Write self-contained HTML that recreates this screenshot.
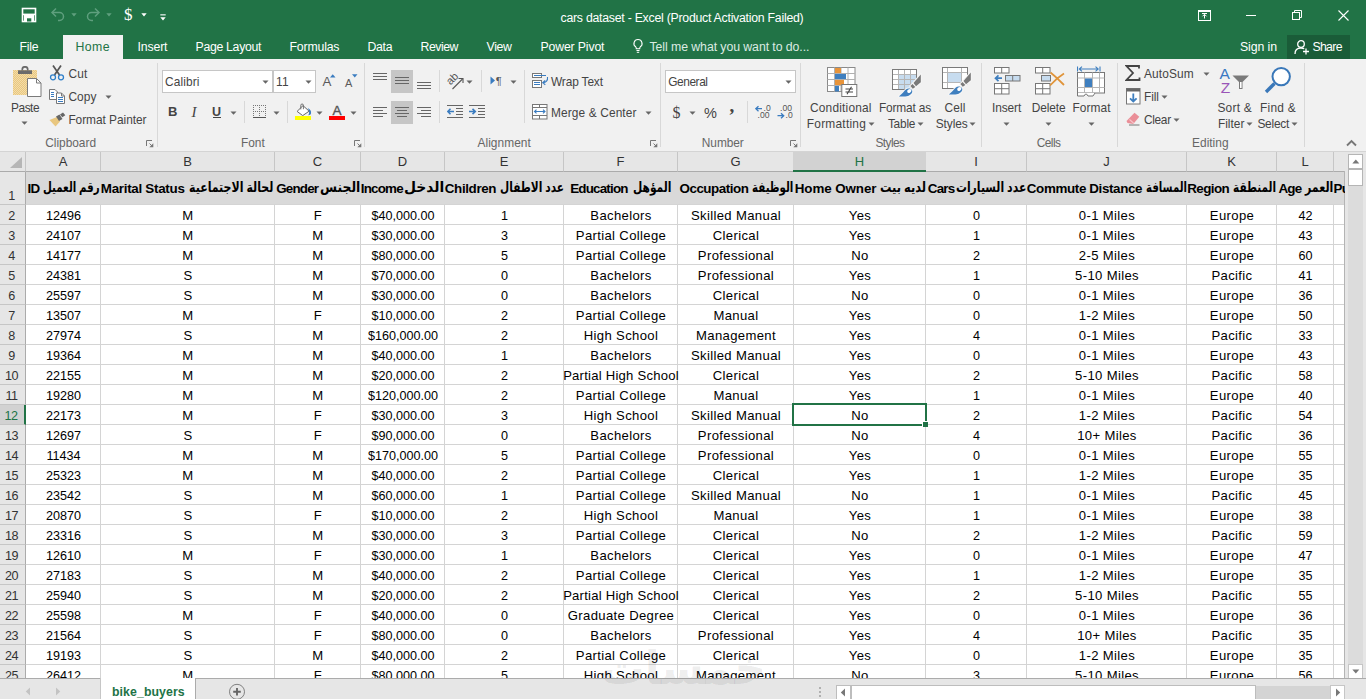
<!DOCTYPE html>
<html lang="en"><head><meta charset="utf-8"><title>cars dataset - Excel</title>
<style>
*{box-sizing:border-box;margin:0;padding:0}
html,body{width:1366px;height:699px;overflow:hidden;background:#fff}
body{position:relative;font-family:"Liberation Sans","DejaVu Sans",sans-serif;font-size:12px;color:#444}
.abs,.abs *{position:absolute}
#title{left:0;top:0;width:1366px;height:59px;background:#217346}
#title .t{color:#fff;font-size:12.5px;white-space:nowrap;line-height:14px}
#hometab{left:63px;top:35px;width:60px;height:25px;background:#f1f1f1}
#ribbon{left:0;top:59px;width:1366px;height:92px;background:#f1f1f1}
#ribbon .l{font-size:12.2px;color:#444;white-space:nowrap;line-height:14px}
#ribbon .g{font-size:12.2px;color:#666;white-space:nowrap;line-height:14px}
#ribbon .sep{width:1px;background:#d5d5d5;top:7px;height:77px}
.dd{width:0;height:0;border-left:3px solid transparent;border-right:3px solid transparent;border-top:3px solid #666}
#rb{left:0;top:151px;width:1366px;height:1px;background:#d4d4d4}
#grid{left:0;top:152px;width:1345px;height:526px;background:#fff;overflow:hidden}
#grid .ch{top:0;height:20px;background:#e6e6e6;border-right:1px solid #c6c6c6;border-bottom:1px solid #ababab;font-size:13px;color:#333;text-align:center;line-height:19px}
#grid .rh{left:0;width:26px;background:#e6e6e6;border-right:1px solid #ababab;border-bottom:1px solid #c6c6c6;font-size:12.6px;letter-spacing:-.5px;color:#333;text-align:center;line-height:19px;padding-right:2px}
#grid .c{font-size:13.1px;letter-spacing:.35px;padding-top:1px;color:#000;text-align:center;white-space:nowrap;line-height:20px;height:20px;overflow:visible}
#grid .c.n{font-size:12.6px;letter-spacing:0;padding-top:1px}
#grid .h1{font-weight:bold;font-size:13.2px;color:#000;white-space:nowrap;line-height:20px;height:20px;top:26px;text-align:center;direction:ltr}
.vl{top:20px;width:1px;height:510px;background:#d4d4d4}
.hl{left:26px;height:1px;width:1320px;background:#d4d4d4}
#bottom{left:0;top:678px;width:1366px;height:21px;background:#e6e6e6;border-top:1px solid #ababab}
#vscroll{left:1345px;top:152px;width:21px;height:526px;background:#e6e6e6}
</style></head><body>

<div id="title" class="abs">
<div style="left:560.5px;top:10.0px;line-height:16px;white-space:nowrap;font-size:12.3px;color:#fff;letter-spacing:-0.25px;">cars dataset - Excel (Product Activation Failed)</div>
<div style="left:19.5px;top:38.5px;line-height:16px;white-space:nowrap;font-size:12.3px;color:#fff;letter-spacing:-0.28px;">File</div>
<div style="left:137.5px;top:38.5px;line-height:16px;white-space:nowrap;font-size:12.3px;color:#fff;letter-spacing:-0.15px;">Insert</div>
<div style="left:195.5px;top:38.5px;line-height:16px;white-space:nowrap;font-size:12.3px;color:#fff;letter-spacing:-0.31px;">Page Layout</div>
<div style="left:289.5px;top:38.5px;line-height:16px;white-space:nowrap;font-size:12.3px;color:#fff;letter-spacing:-0.18px;">Formulas</div>
<div style="left:367.5px;top:38.5px;line-height:16px;white-space:nowrap;font-size:12.3px;color:#fff;letter-spacing:-0.33px;">Data</div>
<div style="left:420.5px;top:38.5px;line-height:16px;white-space:nowrap;font-size:12.3px;color:#fff;letter-spacing:-0.47px;">Review</div>
<div style="left:486.5px;top:38.5px;line-height:16px;white-space:nowrap;font-size:12.3px;color:#fff;letter-spacing:-0.31px;">View</div>
<div style="left:540.5px;top:38.5px;line-height:16px;white-space:nowrap;font-size:12.3px;color:#fff;letter-spacing:-0.16px;">Power Pivot</div>
<div style="left:649.5px;top:38.5px;line-height:16px;white-space:nowrap;font-size:12.3px;color:#dcebe2;letter-spacing:-0.07px;">Tell me what you want to do...</div>
<div style="left:1240.0px;top:38.5px;line-height:16px;white-space:nowrap;font-size:12.3px;color:#fff;letter-spacing:-0.10px;">Sign in</div>
<div style="left:1287px;top:35px;width:63px;height:24px;background:#1a5c38"></div>
<div style="left:1312.5px;top:38.5px;line-height:16px;white-space:nowrap;font-size:12.3px;color:#fff;letter-spacing:-0.71px;">Share</div>
<div id="hometab"></div>
<div style="left:75.5px;top:38.5px;line-height:16px;white-space:nowrap;font-size:12.3px;color:#217346;letter-spacing:0.40px;">Home</div>
<svg style="left:21.0px;top:7.0px" width="16" height="16" viewBox="0 0 16 16"><rect x="1.5" y="1.5" width="13" height="13" fill="none" stroke="#fff" stroke-width="1.6"/><rect x="3" y="8" width="10" height="6.5" fill="#fff"/><rect x="6" y="11.3" width="4.3" height="3.2" fill="#217346"/><rect x="1.5" y="6.6" width="13" height="1.6" fill="#fff"/></svg>
<svg style="left:50.0px;top:7.0px" width="16" height="15" viewBox="0 0 16 15"><path d="M2 5.5h7.5a4 4 0 0 1 0 8H8" fill="none" stroke="#5f9f7e" stroke-width="1.5"/><path d="M6 1.5L2 5.5l4 4" fill="none" stroke="#5f9f7e" stroke-width="1.5"/></svg>
<svg style="left:70.5px;top:12.5px" width="6" height="4" viewBox="0 0 6 4"><path d="M0.3 0.3h5.4L3 3.5z" fill="#5f9f7e"/></svg>
<svg style="left:85.0px;top:7.0px" width="16" height="15" viewBox="0 0 16 15"><path d="M14 5.5H6.5a4 4 0 0 0 0 8H8" fill="none" stroke="#5f9f7e" stroke-width="1.5"/><path d="M10 1.5l4 4l-4 4" fill="none" stroke="#5f9f7e" stroke-width="1.5"/></svg>
<svg style="left:105.5px;top:12.5px" width="6" height="4" viewBox="0 0 6 4"><path d="M0.3 0.3h5.4L3 3.5z" fill="#5f9f7e"/></svg>
<div style="left:124px;top:5px;font-size:17px;line-height:20px;color:#fff;font-family:'Liberation Serif',serif">$</div>
<svg style="left:140.5px;top:12.5px" width="6" height="4" viewBox="0 0 6 4"><path d="M0.3 0.3h5.4L3 3.5z" fill="#fff"/></svg>
<svg style="left:159.5px;top:13.5px" width="6" height="7" viewBox="0 0 6 7"><rect x="0.3" y="0.3" width="5.4" height="1.1" fill="#fff"/><path d="M0.3 3.2h5.4L3 6.4z" fill="#fff"/></svg>
<svg style="left:632.0px;top:38.0px" width="12" height="16" viewBox="0 0 12 16"><path d="M6 1.5a4 4 0 0 1 2.3 7.3c-.5.5-.6 1-.6 2H4.3c0-1-.1-1.500-.6-2A4 4 0 0 1 6 1.500z" fill="none" stroke="#fff" stroke-width="1.100"/><path d="M4.500 12.500h3M4.800 14.300h2.400" stroke="#fff" stroke-width="1"/></svg>
<svg style="left:1294.0px;top:38.5px" width="16" height="16" viewBox="0 0 16 16"><circle cx="7" cy="5" r="3.300" fill="none" stroke="#fff" stroke-width="1.300"/><path d="M1 15c0-4 2.500-6 6-6c1.300 0 2.300.3 3.200.8" fill="none" stroke="#fff" stroke-width="1.300"/><path d="M12 9.500v6M9 12.500h6" stroke="#fff" stroke-width="1.300"/></svg>
<svg style="left:1198.0px;top:10.0px" width="13" height="11" viewBox="0 0 13 11"><rect x="0.500" y="0.500" width="12" height="10" fill="none" stroke="#fff" stroke-width="1"/><rect x="0.500" y="0.500" width="12" height="1.500" fill="#fff"/><path d="M6.500 8.500V4.500M4.500 6.300l2-2l2 2M4 3.500h5" fill="none" stroke="#fff" stroke-width="1"/></svg>
<svg style="left:1246.0px;top:15.0px" width="10" height="1" viewBox="0 0 10 1"><rect x="0" y="0" width="10" height="1" fill="#fff"/></svg>
<svg style="left:1292.0px;top:10.0px" width="10" height="10" viewBox="0 0 10 10"><rect x="0.500" y="2.500" width="7" height="7" fill="none" stroke="#fff" stroke-width="1"/><path d="M2.500 2.500v-2h7v7h-2" fill="none" stroke="#fff" stroke-width="1"/></svg>
<svg style="left:1338.0px;top:10.0px" width="11" height="11" viewBox="0 0 11 11"><path d="M0.500 0.500l10 10M10.500 0.500l-10 10" stroke="#fff" stroke-width="1.100"/></svg>
</div>
<div id="ribbon" class="abs">
<div style="left:11.1px;top:41.0px;line-height:16px;white-space:nowrap;font-size:11.9px;color:#444;letter-spacing:-0.50px;">Paste</div>
<svg style="left:21.0px;top:62.3px" width="7" height="4" viewBox="0 0 7 4"><path d="M0.5 0.5h6L3.5 3.8z" fill="#666"/></svg>
<div style="left:68.4px;top:6.5px;line-height:16px;white-space:nowrap;font-size:11.9px;color:#444;letter-spacing:0.24px;">Cut</div>
<div style="left:68.4px;top:29.6px;line-height:16px;white-space:nowrap;font-size:11.9px;color:#444;letter-spacing:0.08px;">Copy</div>
<svg style="left:105.0px;top:35.5px" width="7" height="4" viewBox="0 0 7 4"><path d="M0.5 0.5h6L3.5 3.8z" fill="#666"/></svg>
<div style="left:68.4px;top:52.5px;line-height:16px;white-space:nowrap;font-size:11.9px;color:#444;letter-spacing:-0.04px;">Format Painter</div>
<div style="left:45.2px;top:76.0px;line-height:16px;white-space:nowrap;font-size:11.9px;color:#666;letter-spacing:-0.01px;">Clipboard</div>
<svg style="left:146.0px;top:81.0px" width="8" height="8" viewBox="0 0 8 8"><path d="M0.500 6V0.500H6M3.500 3.500L6 6" fill="none" stroke="#777" stroke-width="1"/><path d="M7.300 3.300v4H3.300z" fill="#777"/></svg>
<div style="left:157.0px;top:4.0px;width:1.0px;height:84.0px;background:#d8d8d8"></div>
<svg style="left:12.0px;top:7.0px" width="30" height="32" viewBox="0 0 30 32"><defs><pattern id="pd" width="2" height="2" patternUnits="userSpaceOnUse"><rect width="2" height="2" fill="#e9c77f"/><rect width="1" height="1" fill="#f3dca9"/><rect x="1" y="1" width="1" height="1" fill="#f3dca9"/></pattern></defs><rect x="1" y="4" width="24" height="25" fill="url(#pd)"/><rect x="6" y="4.300" width="14" height="3.700" fill="#6b6b6b"/><path d="M10.300 4.500V3.300a2.700 2.500 0 0 1 5.400 0V4.500" fill="none" stroke="#6b6b6b" stroke-width="1.700"/><path d="M15.500 12.500h9l4.500 4.500v13.500h-13.500z" fill="#fff" stroke="#7a7a7a" stroke-width="1"/><path d="M24.500 12.500v4.500h4.500" fill="none" stroke="#7a7a7a" stroke-width="1"/></svg>
<svg style="left:49.0px;top:6.0px" width="16" height="16" viewBox="0 0 16 16"><path d="M4 0.500L10.500 10M12 0.500L5.500 10" stroke="#555" stroke-width="1.700" fill="none"/><circle cx="4" cy="12.300" r="2.500" fill="none" stroke="#2e7fc9" stroke-width="1.300"/><circle cx="12" cy="12.300" r="2.500" fill="none" stroke="#2e7fc9" stroke-width="1.300"/></svg>
<svg style="left:49.0px;top:30.0px" width="17" height="15" viewBox="0 0 17 15"><path d="M0.500 0.500h5.500l2.500 2.500v7.500h-8z" fill="#fff" stroke="#777" stroke-width="1"/><path d="M2 3.500h3M2 5.500h3M2 7.500h3" stroke="#3a7cc0" stroke-width="1"/><path d="M7.500 4h5l3 3v7.500h-8z" fill="#fff" stroke="#777" stroke-width="1"/><path d="M12.500 4v3h3" fill="none" stroke="#777" stroke-width="1"/><path d="M9 8.500h5M9 10.500h5M9 12.500h5" stroke="#3a7cc0" stroke-width="1"/></svg>
<svg style="left:49.0px;top:53.0px" width="17" height="15" viewBox="0 0 17 15"><path d="M0.500 8L8 5l3 4.500L6.500 14.500z" fill="#e9c77f"/><path d="M7 4.500l3.500-2l3 4.500l-3.500 2z" fill="#666"/><path d="M11 2.500l3-2l2.300 2.800l-3 2z" fill="#666"/></svg>
<div style="left:162.0px;top:11.0px;width:110.5px;height:23.0px;background:#fff;border:1px solid #c6c6c6"></div>
<div style="left:273.0px;top:11.0px;width:43.0px;height:23.0px;background:#fff;border:1px solid #c6c6c6"></div>
<div style="left:165.0px;top:14.5px;line-height:16px;white-space:nowrap;font-size:11.9px;color:#444;letter-spacing:0.13px;">Calibri</div>
<svg style="left:262.0px;top:20.5px" width="7" height="4" viewBox="0 0 7 4"><path d="M0.5 0.5h6L3.5 3.8z" fill="#666"/></svg>
<div style="left:276.0px;top:14.5px;line-height:16px;white-space:nowrap;font-size:11.9px;color:#444;letter-spacing:0.16px;">11</div>
<svg style="left:305.0px;top:20.5px" width="7" height="4" viewBox="0 0 7 4"><path d="M0.5 0.5h6L3.5 3.8z" fill="#666"/></svg>
<div style="left:240.9px;top:76.0px;line-height:16px;white-space:nowrap;font-size:11.9px;color:#666;letter-spacing:0.03px;">Font</div>
<svg style="left:353.5px;top:81.0px" width="8" height="8" viewBox="0 0 8 8"><path d="M0.500 6V0.500H6M3.500 3.500L6 6" fill="none" stroke="#777" stroke-width="1"/><path d="M7.300 3.300v4H3.300z" fill="#777"/></svg>
<div style="left:364.0px;top:4.0px;width:1.0px;height:84.0px;background:#d8d8d8"></div>
<div style="left:244.0px;top:42.0px;width:1.0px;height:22.0px;background:#d8d8d8"></div>
<div style="left:287.0px;top:42.0px;width:1.0px;height:22.0px;background:#d8d8d8"></div>
<svg style="left:230.0px;top:51.5px" width="7" height="4" viewBox="0 0 7 4"><path d="M0.5 0.5h6L3.5 3.8z" fill="#666"/></svg>
<svg style="left:273.0px;top:51.5px" width="7" height="4" viewBox="0 0 7 4"><path d="M0.5 0.5h6L3.5 3.8z" fill="#666"/></svg>
<svg style="left:316.0px;top:51.5px" width="7" height="4" viewBox="0 0 7 4"><path d="M0.5 0.5h6L3.5 3.8z" fill="#666"/></svg>
<svg style="left:350.0px;top:51.5px" width="7" height="4" viewBox="0 0 7 4"><path d="M0.5 0.5h6L3.5 3.8z" fill="#666"/></svg>
<div style="left:322.500px;top:15.0px;font-size:13.300px;line-height:16px;color:#5a5a5a">A</div>
<svg style="left:330.0px;top:15.0px" width="6" height="4" viewBox="0 0 6 4"><path d="M0 3.500h5.500L2.750 0.300z" fill="#3a7cc0"/></svg>
<div style="left:345px;top:15.5px;font-size:11px;line-height:16px;color:#5a5a5a">A</div>
<svg style="left:352.0px;top:15.0px" width="6" height="4" viewBox="0 0 6 4"><path d="M0 0.300h5.500L2.750 3.500z" fill="#3a7cc0"/></svg>
<div style="left:168px;top:44.5px;font-size:13px;font-weight:bold;line-height:16px;color:#444">B</div>
<div style="left:191.500px;top:44.5px;font-size:15px;font-style:italic;line-height:16px;color:#444;font-family:'Liberation Serif',serif">I</div>
<div style="left:212px;top:44.5px;font-size:12.500px;font-weight:bold;line-height:16px;color:#444">U</div>
<div style="left:212.5px;top:58.0px;width:8.0px;height:1.0px;background:#444"></div>
<svg style="left:253.0px;top:46.0px" width="14" height="13" viewBox="0 0 14 13"><path d="M0.500 0v12M6.500 0v12M12.500 0v12M0 0.500h13M0 6.500h13" fill="none" stroke="#777" stroke-width="1" stroke-dasharray="1 1" shape-rendering="crispEdges"/><path d="M0 12.500h13" stroke="#555" stroke-width="1" shape-rendering="crispEdges"/></svg>
<svg style="left:295.0px;top:44.0px" width="17" height="17" viewBox="0 0 17 17"><path d="M8 2.600L14.100 8.200L7.700 12.600L2.100 8.400z" fill="#fff" stroke="#666" stroke-width="1"/><path d="M5.800 6.400V2.300a1.300 1.300 0 0 1 2.600 0V6.200" fill="none" stroke="#666" stroke-width="0.900"/><path d="M12.600 5C15 6 16.600 8 16 10.500C15.600 11.500 14.500 12.400 13.300 12.200C14.500 10.500 14.600 7.500 12.600 5z" fill="#3a7cc0"/><rect x="0" y="13" width="16" height="4" fill="#ffff00"/></svg>
<div style="left:332.500px;top:43.5px;font-size:13.500px;line-height:16px;color:#555;-webkit-text-stroke:.35px #555">A</div>
<div style="left:329.0px;top:57.0px;width:16.0px;height:4.0px;background:#f00"></div>
<div style="left:391.0px;top:11.0px;width:22.0px;height:23.0px;background:#c6c6c6"></div>
<div style="left:391.0px;top:42.0px;width:22.0px;height:23.0px;background:#c6c6c6"></div>
<div style="left:439.0px;top:11.0px;width:1.0px;height:22.0px;background:#d8d8d8"></div>
<div style="left:439.0px;top:42.0px;width:1.0px;height:22.0px;background:#d8d8d8"></div>
<div style="left:481.0px;top:11.0px;width:1.0px;height:22.0px;background:#d8d8d8"></div>
<div style="left:524.0px;top:11.0px;width:1.0px;height:53.0px;background:#d8d8d8"></div>
<svg style="left:466.0px;top:20.5px" width="7" height="4" viewBox="0 0 7 4"><path d="M0.5 0.5h6L3.5 3.8z" fill="#666"/></svg>
<svg style="left:510.0px;top:20.5px" width="7" height="4" viewBox="0 0 7 4"><path d="M0.5 0.5h6L3.5 3.8z" fill="#666"/></svg>
<div style="left:551.0px;top:14.5px;line-height:16px;white-space:nowrap;font-size:11.9px;color:#444;letter-spacing:-0.14px;">Wrap Text</div>
<div style="left:551.0px;top:45.5px;line-height:16px;white-space:nowrap;font-size:11.9px;color:#444;letter-spacing:0.12px;">Merge &amp; Center</div>
<svg style="left:645.0px;top:51.5px" width="7" height="4" viewBox="0 0 7 4"><path d="M0.5 0.5h6L3.5 3.8z" fill="#666"/></svg>
<div style="left:477.5px;top:76.0px;line-height:16px;white-space:nowrap;font-size:11.9px;color:#666;letter-spacing:0.05px;">Alignment</div>
<svg style="left:649.5px;top:81.0px" width="8" height="8" viewBox="0 0 8 8"><path d="M0.500 6V0.500H6M3.500 3.500L6 6" fill="none" stroke="#777" stroke-width="1"/><path d="M7.300 3.300v4H3.300z" fill="#777"/></svg>
<div style="left:660.0px;top:4.0px;width:1.0px;height:84.0px;background:#d8d8d8"></div>
<svg style="left:373.0px;top:11.0px" width="14" height="23" viewBox="0 0 14 23"><rect x="0.0" y="3.0" width="14.0" height="1" fill="#666"/><rect x="0.0" y="6.0" width="14.0" height="1" fill="#666"/><rect x="0.0" y="9.0" width="14.0" height="1" fill="#666"/></svg>
<svg style="left:395.0px;top:11.0px" width="14" height="23" viewBox="0 0 14 23"><rect x="0.0" y="7.0" width="14.0" height="1" fill="#666"/><rect x="0.0" y="10.0" width="14.0" height="1" fill="#666"/><rect x="0.0" y="13.0" width="14.0" height="1" fill="#666"/></svg>
<svg style="left:417.0px;top:11.0px" width="14" height="23" viewBox="0 0 14 23"><rect x="0.0" y="12.0" width="14.0" height="1" fill="#666"/><rect x="0.0" y="15.0" width="14.0" height="1" fill="#666"/><rect x="0.0" y="18.0" width="14.0" height="1" fill="#666"/></svg>
<svg style="left:373.0px;top:42.0px" width="14" height="23" viewBox="0 0 14 23"><rect x="0.0" y="6.0" width="14.0" height="1" fill="#666"/><rect x="0.0" y="9.0" width="10.0" height="1" fill="#666"/><rect x="0.0" y="12.0" width="14.0" height="1" fill="#666"/><rect x="0.0" y="15.0" width="10.0" height="1" fill="#666"/></svg>
<svg style="left:395.0px;top:42.0px" width="14" height="23" viewBox="0 0 14 23"><rect x="0.0" y="6.0" width="14.0" height="1" fill="#666"/><rect x="2.0" y="9.0" width="10.0" height="1" fill="#666"/><rect x="0.0" y="12.0" width="14.0" height="1" fill="#666"/><rect x="2.0" y="15.0" width="10.0" height="1" fill="#666"/></svg>
<svg style="left:417.0px;top:42.0px" width="14" height="23" viewBox="0 0 14 23"><rect x="0.0" y="6.0" width="14.0" height="1" fill="#666"/><rect x="4.0" y="9.0" width="10.0" height="1" fill="#666"/><rect x="0.0" y="12.0" width="14.0" height="1" fill="#666"/><rect x="4.0" y="15.0" width="10.0" height="1" fill="#666"/></svg>
<svg style="left:445.0px;top:12.0px" width="20" height="19" viewBox="0 0 20 19"><text x="0" y="0" transform="translate(5.500,14.500) rotate(-45)" font-size="11" fill="#555" font-family="Liberation Sans,sans-serif">ab</text><path d="M7.500 18L17.500 8" stroke="#555" stroke-width="1.100"/><path d="M13.500 7.500h4.500v4.500" fill="none" stroke="#555" stroke-width="1.100"/></svg>
<svg style="left:490.0px;top:16.0px" width="14" height="11" viewBox="0 0 14 11"><path d="M0.500 1.500v8l4.500-4z" fill="#3a7cc0"/><text x="5.800" y="9.500" font-size="11" fill="#555" font-family="Liberation Sans,sans-serif">¶</text></svg>
<svg style="left:447.0px;top:46.0px" width="16" height="14" viewBox="0 0 16 14"><rect x="0" y="0" width="16" height="1" fill="#666"/><rect x="0" y="12" width="16" height="1" fill="#666"/><rect x="9" y="3" width="7" height="1" fill="#666"/><rect x="9" y="6" width="7" height="1" fill="#666"/><rect x="9" y="9" width="7" height="1" fill="#666"/><path d="M1 6.500h6M3.500 3.800L0.800 6.500L3.500 9.200" fill="none" stroke="#3a7cc0" stroke-width="1.600"/></svg>
<svg style="left:469.0px;top:46.0px" width="16" height="14" viewBox="0 0 16 14"><rect x="0" y="0" width="16" height="1" fill="#666"/><rect x="0" y="12" width="16" height="1" fill="#666"/><rect x="9" y="3" width="7" height="1" fill="#666"/><rect x="9" y="6" width="7" height="1" fill="#666"/><rect x="9" y="9" width="7" height="1" fill="#666"/><path d="M0 6.500h6M3.500 3.800L6.300 6.500L3.500 9.200" fill="none" stroke="#3a7cc0" stroke-width="1.600"/></svg>
<svg style="left:532.0px;top:14.0px" width="17" height="16" viewBox="0 0 17 16"><rect x="0.500" y="0.500" width="9" height="4" fill="#fff" stroke="#777"/><rect x="0.500" y="7.500" width="9" height="7" fill="#fff" stroke="#777"/><path d="M2 2.500h12M2 9.500h6M2 11.500h6" stroke="#3a7cc0" stroke-width="1"/><path d="M15.500 4c0.500 3.500-1.500 5.500-4.500 5.800M13.200 7.300l-2.500 2.500l2.600 2" fill="none" stroke="#3a7cc0" stroke-width="1.100"/></svg>
<svg style="left:532.0px;top:45.0px" width="16" height="16" viewBox="0 0 16 16"><rect x="0.500" y="0.500" width="14.500" height="14.500" fill="#fff" stroke="#777"/><path d="M0.500 3.500h14.500M0.500 11.500h14.500M7.500 0.500v3M7.500 11.500v3.500" stroke="#777" stroke-width="1"/><path d="M2.500 7.500h10.500M4.500 5.600L2.500 7.500l2 1.900M11 5.600l2 1.900l-2 1.900" fill="none" stroke="#3a7cc0" stroke-width="1.100"/></svg>
<div style="left:665.0px;top:11.0px;width:131.0px;height:23.0px;background:#fff;border:1px solid #c6c6c6"></div>
<div style="left:668.2px;top:14.5px;line-height:16px;white-space:nowrap;font-size:11.9px;color:#444;letter-spacing:-0.42px;">General</div>
<svg style="left:784.5px;top:20.5px" width="7" height="4" viewBox="0 0 7 4"><path d="M0.5 0.5h6L3.5 3.8z" fill="#666"/></svg>
<svg style="left:689.0px;top:51.5px" width="7" height="4" viewBox="0 0 7 4"><path d="M0.5 0.5h6L3.5 3.8z" fill="#666"/></svg>
<div style="left:747.0px;top:42.0px;width:1.0px;height:22.0px;background:#d8d8d8"></div>
<div style="left:701.8px;top:76.0px;line-height:16px;white-space:nowrap;font-size:11.9px;color:#666;letter-spacing:-0.06px;">Number</div>
<svg style="left:789.5px;top:81.0px" width="8" height="8" viewBox="0 0 8 8"><path d="M0.500 6V0.500H6M3.500 3.500L6 6" fill="none" stroke="#777" stroke-width="1"/><path d="M7.300 3.300v4H3.300z" fill="#777"/></svg>
<div style="left:800.0px;top:4.0px;width:1.0px;height:84.0px;background:#d8d8d8"></div>
<div style="left:672.500px;top:44.0px;font-size:16px;line-height:20px;color:#444;font-family:'Liberation Serif',serif">$</div>
<div style="left:704px;top:43.5px;font-size:14.500px;line-height:20px;color:#444">%</div>
<div style="left:729.500px;top:37.0px;font-size:19px;font-weight:bold;line-height:20px;color:#444;font-family:'Liberation Serif',serif">,</div>
<svg style="left:755.0px;top:45.0px" width="16" height="15" viewBox="0 0 16 15"><path d="M1 4.700h6M3.500 2.200L0.800 4.700L3.500 7.200" fill="none" stroke="#3a7cc0" stroke-width="1.300"/><text x="8.500" y="7" font-size="8.600" fill="#555" font-family="Liberation Sans,sans-serif">.0</text><text x="2.500" y="14" font-size="8.600" fill="#555" font-family="Liberation Sans,sans-serif">.00</text></svg>
<svg style="left:777.0px;top:45.0px" width="16" height="15" viewBox="0 0 16 15"><path d="M0.500 11.700h6M4 9.200l2.700 2.500L4 14.200" fill="none" stroke="#3a7cc0" stroke-width="1.300"/><text x="3" y="7" font-size="8.600" fill="#555" font-family="Liberation Sans,sans-serif">.00</text><text x="8.500" y="14" font-size="8.600" fill="#555" font-family="Liberation Sans,sans-serif">.0</text></svg>
<div style="left:810.0px;top:41.0px;line-height:16px;white-space:nowrap;font-size:11.9px;color:#444;letter-spacing:0.20px;">Conditional</div>
<div style="left:806.8px;top:56.7px;line-height:16px;white-space:nowrap;font-size:11.9px;color:#444;letter-spacing:0.24px;">Formatting</div>
<svg style="left:868.0px;top:63.0px" width="7" height="4" viewBox="0 0 7 4"><path d="M0.5 0.5h6L3.5 3.8z" fill="#666"/></svg>
<div style="left:879.0px;top:41.0px;line-height:16px;white-space:nowrap;font-size:11.9px;color:#444;letter-spacing:-0.17px;">Format as</div>
<div style="left:887.9px;top:56.7px;line-height:16px;white-space:nowrap;font-size:11.9px;color:#444;letter-spacing:-0.21px;">Table</div>
<svg style="left:917.0px;top:63.0px" width="7" height="4" viewBox="0 0 7 4"><path d="M0.5 0.5h6L3.5 3.8z" fill="#666"/></svg>
<div style="left:944.5px;top:41.0px;line-height:16px;white-space:nowrap;font-size:11.9px;color:#444;letter-spacing:0.11px;">Cell</div>
<div style="left:935.7px;top:56.7px;line-height:16px;white-space:nowrap;font-size:11.9px;color:#444;letter-spacing:-0.06px;">Styles</div>
<svg style="left:968.5px;top:63.0px" width="7" height="4" viewBox="0 0 7 4"><path d="M0.5 0.5h6L3.5 3.8z" fill="#666"/></svg>
<div style="left:875.5px;top:76.0px;line-height:16px;white-space:nowrap;font-size:11.9px;color:#666;letter-spacing:-0.60px;">Styles</div>
<div style="left:981.0px;top:4.0px;width:1.0px;height:84.0px;background:#d8d8d8"></div>
<svg style="left:827.0px;top:8.0px" width="31" height="30.5" viewBox="0 0 31 30.5"><rect x="0.500" y="0.500" width="27.500" height="24" fill="#fff" stroke="#8a8a8a"/><path d="M7.5 0.500v24" stroke="#b0b0b0" stroke-width="1"/><path d="M14.0 0.500v24" stroke="#b0b0b0" stroke-width="1"/><path d="M21.0 0.500v24" stroke="#b0b0b0" stroke-width="1"/><path d="M0.500 6.5h27.500" stroke="#b0b0b0" stroke-width="1"/><path d="M0.500 12.5h27.500" stroke="#b0b0b0" stroke-width="1"/><path d="M0.500 18.5h27.500" stroke="#b0b0b0" stroke-width="1"/><rect x="8" y="1" width="6" height="5" fill="#e8943a"/><rect x="8" y="13" width="9" height="5" fill="#e8943a"/><rect x="8" y="7" width="11" height="5" fill="#3f7fbf"/><rect x="8" y="19" width="4" height="5.500" fill="#3f7fbf"/><rect x="14.800" y="17.500" width="15" height="12" fill="#fff" stroke="#777"/><path d="M18.500 22h7.500M18.500 25h7.500M24.500 19.800l-4.500 7.500" stroke="#444" stroke-width="1.100" fill="none"/></svg>
<svg style="left:892.0px;top:10.0px" width="26" height="21" viewBox="0 0 26 21"><g clip-path="polygon(0 0,26px 0,26px 15.600px,19.900px 21px,0 21px)"><rect x="0.500" y="0.500" width="24" height="20" fill="#fff" stroke="#7a7a7a"/><rect x="6.500" y="5.500" width="18" height="15" fill="#c7dcef"/><path d="M6.5 1v19" stroke="#b5b5b5" stroke-width="1"/><path d="M12.5 1v19" stroke="#b5b5b5" stroke-width="1"/><path d="M18.5 1v19" stroke="#b5b5b5" stroke-width="1"/><path d="M1 5.5h23" stroke="#b5b5b5" stroke-width="1"/><path d="M1 10.5h23" stroke="#b5b5b5" stroke-width="1"/><path d="M1 15.5h23" stroke="#b5b5b5" stroke-width="1"/><rect x="0.500" y="0.500" width="24" height="20" fill="none" stroke="#7a7a7a"/></g></svg>
<svg style="left:898.0px;top:14.0px" width="24" height="25" viewBox="0 0 24 25"><path d="M22.800 1.500V9.200L18 13.200L15.500 9.900z" fill="#7a7a7a" stroke="#f6f6f6" stroke-width="2"/><path d="M14.500 10.900L17.300 14L14.800 15.800L12.400 13z" fill="#7a7a7a" stroke="#f6f6f6" stroke-width="2"/><path d="M0.900 23.400C4 21 6 18 8.200 16.200C10 14.800 13 15.300 14 17.300C15 19.500 13 21.800 10 23C7 23.800 3 23.600 0.900 23.400z" fill="#3f7fbf" stroke="#f6f6f6" stroke-width="2"/><path d="M22.800 1.500V9.200L18 13.200L15.500 9.900z" fill="#7a7a7a" /><path d="M14.500 10.900L17.300 14L14.800 15.800L12.400 13z" fill="#7a7a7a" /><path d="M0.900 23.400C4 21 6 18 8.200 16.200C10 14.800 13 15.300 14 17.300C15 19.500 13 21.800 10 23C7 23.800 3 23.600 0.900 23.400z" fill="#3f7fbf" /><ellipse cx="11.300" cy="18" rx="2.300" ry="1.700" transform="rotate(-35 11.300 18)" fill="#fff"/></svg>
<svg style="left:942.0px;top:8.0px" width="27" height="22" viewBox="0 0 27 22"><g clip-path="polygon(0 0,27px 0,27px 15.900px,19px 22px,0 22px)"><rect x="0.500" y="0.500" width="25" height="21" fill="#fff" stroke="#7a7a7a"/><path d="M5.5 1v20" stroke="#b5b5b5" stroke-width="1"/><path d="M19.5 1v20" stroke="#b5b5b5" stroke-width="1"/><path d="M1 5.5h24" stroke="#b5b5b5" stroke-width="1"/><path d="M1 15.5h24" stroke="#b5b5b5" stroke-width="1"/><rect x="6" y="6" width="13" height="9" fill="#c7dcef"/></g></svg>
<svg style="left:948.0px;top:12.3px" width="24" height="25" viewBox="0 0 24 25"><path d="M22.800 1.500V9.200L18 13.200L15.500 9.900z" fill="#7a7a7a" stroke="#f6f6f6" stroke-width="2"/><path d="M14.500 10.900L17.300 14L14.800 15.800L12.400 13z" fill="#7a7a7a" stroke="#f6f6f6" stroke-width="2"/><path d="M0.900 23.400C4 21 6 18 8.200 16.200C10 14.800 13 15.300 14 17.300C15 19.500 13 21.800 10 23C7 23.800 3 23.600 0.900 23.400z" fill="#3f7fbf" stroke="#f6f6f6" stroke-width="2"/><path d="M22.800 1.500V9.200L18 13.200L15.500 9.900z" fill="#7a7a7a" /><path d="M14.500 10.900L17.300 14L14.800 15.800L12.400 13z" fill="#7a7a7a" /><path d="M0.900 23.400C4 21 6 18 8.200 16.200C10 14.800 13 15.300 14 17.300C15 19.500 13 21.800 10 23C7 23.800 3 23.600 0.900 23.400z" fill="#3f7fbf" /><ellipse cx="11.300" cy="18" rx="2.300" ry="1.700" transform="rotate(-35 11.300 18)" fill="#fff"/></svg>
<div style="left:992.1px;top:41.0px;line-height:16px;white-space:nowrap;font-size:11.9px;color:#444;letter-spacing:-0.13px;">Insert</div>
<svg style="left:1003.0px;top:62.5px" width="7" height="4" viewBox="0 0 7 4"><path d="M0.5 0.5h6L3.5 3.8z" fill="#666"/></svg>
<div style="left:1031.8px;top:41.0px;line-height:16px;white-space:nowrap;font-size:11.9px;color:#444;letter-spacing:-0.13px;">Delete</div>
<svg style="left:1045.0px;top:62.5px" width="7" height="4" viewBox="0 0 7 4"><path d="M0.5 0.5h6L3.5 3.8z" fill="#666"/></svg>
<div style="left:1072.4px;top:41.0px;line-height:16px;white-space:nowrap;font-size:11.9px;color:#444;letter-spacing:0.09px;">Format</div>
<svg style="left:1088.0px;top:62.5px" width="7" height="4" viewBox="0 0 7 4"><path d="M0.5 0.5h6L3.5 3.8z" fill="#666"/></svg>
<div style="left:1036.8px;top:76.0px;line-height:16px;white-space:nowrap;font-size:11.9px;color:#666;letter-spacing:-0.58px;">Cells</div>
<div style="left:1117.0px;top:4.0px;width:1.0px;height:84.0px;background:#d8d8d8"></div>
<svg style="left:994.0px;top:8.0px" width="27" height="28" viewBox="0 0 27 28"><rect x="0.500" y="0.500" width="14.500" height="5.500" fill="#fff" stroke="#777"/><path d="M7.700 0.500v5.500" stroke="#777"/><rect x="11.500" y="8.500" width="14.500" height="5.500" fill="#c7dcef" stroke="#777"/><path d="M18.700 8.500v5.500" stroke="#777"/><rect x="0.500" y="16.500" width="14.500" height="10.500" fill="#fff" stroke="#777"/><path d="M7.700 16.500v10.500M0.500 21.700h14.500" stroke="#777"/><path d="M1.500 11.200h6.500M4.500 8.300L1.500 11.200l3 2.900" fill="none" stroke="#3f7fbf" stroke-width="1.700"/></svg>
<svg style="left:1035.0px;top:8.0px" width="30" height="28" viewBox="0 0 30 28"><rect x="0.500" y="0.500" width="14.500" height="5.500" fill="#fff" stroke="#777"/><path d="M7.700 0.500v5.500" stroke="#777"/><rect x="6.500" y="8.500" width="9" height="5.500" fill="#c7dcef" stroke="#777"/><rect x="0.500" y="16.500" width="14.500" height="10.500" fill="#fff" stroke="#777"/><path d="M7.700 16.500v10.500M0.500 21.700h14.500" stroke="#777"/><path d="M15.500 5.500c4 3 8 7 13.500 12.500M29 6.500c-5 3-10 7.500-14 12" fill="none" stroke="#e0943a" stroke-width="1.800"/></svg>
<svg style="left:1077.0px;top:7.0px" width="28.5" height="31" viewBox="0 0 28.5 31"><path d="M0.500 0.500v5M23 0.500v5M2 3h19.500M5 0.700L2.300 3L5 5.300M18.500 0.700L21.200 3L18.500 5.300" fill="none" stroke="#3f7fbf" stroke-width="1.100"/><rect x="0.500" y="6.500" width="27" height="20.500" fill="#fff" stroke="#777"/><path d="M7.500 6.500v20.500M15.500 6.500v20.500M22.500 6.500v20.500M0.500 12h27M0.500 21.500h27" stroke="#b5b5b5"/><rect x="8" y="12.500" width="7" height="8.500" fill="#3f7fbf"/><path d="M0.500 27v3h6.500l1.500-2h1l1.500 2h5l2-3" fill="#fff" stroke="#777"/></svg>
<div style="left:1144.0px;top:7.0px;line-height:16px;white-space:nowrap;font-size:11.9px;color:#444;letter-spacing:0.13px;">AutoSum</div>
<svg style="left:1203.0px;top:13.0px" width="7" height="4" viewBox="0 0 7 4"><path d="M0.5 0.5h6L3.5 3.8z" fill="#666"/></svg>
<div style="left:1144.0px;top:29.6px;line-height:16px;white-space:nowrap;font-size:11.9px;color:#444;letter-spacing:-0.10px;">Fill</div>
<svg style="left:1161.0px;top:36.0px" width="7" height="4" viewBox="0 0 7 4"><path d="M0.5 0.5h6L3.5 3.8z" fill="#666"/></svg>
<div style="left:1144.0px;top:52.8px;line-height:16px;white-space:nowrap;font-size:11.9px;color:#444;letter-spacing:-0.33px;">Clear</div>
<svg style="left:1173.0px;top:59.0px" width="7" height="4" viewBox="0 0 7 4"><path d="M0.5 0.5h6L3.5 3.8z" fill="#666"/></svg>
<div style="left:1217.4px;top:41.0px;line-height:16px;white-space:nowrap;font-size:11.9px;color:#444;letter-spacing:0.25px;">Sort &amp;</div>
<div style="left:1217.9px;top:56.7px;line-height:16px;white-space:nowrap;font-size:11.9px;color:#444;letter-spacing:0.03px;">Filter</div>
<svg style="left:1245.5px;top:63.0px" width="7" height="4" viewBox="0 0 7 4"><path d="M0.5 0.5h6L3.5 3.8z" fill="#666"/></svg>
<div style="left:1260.0px;top:41.0px;line-height:16px;white-space:nowrap;font-size:11.9px;color:#444;letter-spacing:0.28px;">Find &amp;</div>
<div style="left:1257.4px;top:56.7px;line-height:16px;white-space:nowrap;font-size:11.9px;color:#444;letter-spacing:-0.21px;">Select</div>
<svg style="left:1291.0px;top:63.0px" width="7" height="4" viewBox="0 0 7 4"><path d="M0.5 0.5h6L3.5 3.8z" fill="#666"/></svg>
<div style="left:1192.1px;top:76.0px;line-height:16px;white-space:nowrap;font-size:11.9px;color:#666;letter-spacing:0.01px;">Editing</div>
<div style="left:1304.0px;top:4.0px;width:1.0px;height:84.0px;background:#d8d8d8"></div>
<svg style="left:1346.0px;top:80.0px" width="11" height="8" viewBox="0 0 11 8"><path d="M1 6.500L5.500 2L10 6.500" fill="none" stroke="#777" stroke-width="1.900"/></svg>
<svg style="left:1124.5px;top:6.0px" width="16" height="16" viewBox="0 0 16 16"><path d="M14 3.500V1H1.500L8 8L1.500 15H14.500V12.500" fill="none" stroke="#444" stroke-width="1.800" stroke-linejoin="miter"/></svg>
<svg style="left:1126.0px;top:29.0px" width="15" height="17" viewBox="0 0 15 17"><rect x="0.500" y="0.500" width="13.500" height="15.500" fill="#fff" stroke="#777"/><rect x="0.500" y="0.500" width="13.500" height="3" fill="#666"/><path d="M7.300 5.500v8M4 10.300l3.300 3.200l3.300-3.200" fill="none" stroke="#3f7fbf" stroke-width="1.800"/></svg>
<svg style="left:1126.0px;top:52.5px" width="15" height="14" viewBox="0 0 15 14"><path d="M8.500 0.800l4.800 4l-6 7.200l-5.800-1l-1-2z" fill="#ea8e97"/><path d="M3.500 7.500l4.500 4" stroke="#f6c4c9" stroke-width="1.200"/><path d="M3 13h10.500" stroke="#777" stroke-width="1"/></svg>
<div style="left:1219.500px;top:7.0px;font-size:15.500px;line-height:16px;color:#3a78c2">A</div>
<div style="left:1220.800px;top:21.0px;font-size:15.500px;line-height:16px;color:#9a55b8">Z</div>
<svg style="left:1232.0px;top:16.0px" width="18" height="15" viewBox="0 0 18 15"><path d="M0.500 0.500h16.500l-6.500 6.500v7h-3.500v-7z" fill="#7a7a7a"/><rect x="8" y="7" width="1.600" height="6" fill="#fff"/></svg>
<svg style="left:1263.0px;top:6.0px" width="30" height="30" viewBox="0 0 30 30"><circle cx="18.200" cy="11.600" r="8.700" fill="#fff" stroke="#3a78b9" stroke-width="2"/><path d="M11.500 18.500L3 27" stroke="#3a78b9" stroke-width="3.400" stroke-linecap="butt"/></svg>
</div>
<div id="rb" class="abs"></div>
<div id="grid" class="abs">
<div class="ch" style="left:0;width:26px"></div>
<div style="left:10px;top:5px;width:0;height:0;border-left:12px solid transparent;border-bottom:11px solid #b6b6b6"></div>
<div class="ch" style="left:26px;width:75px">A</div>
<div class="ch" style="left:101px;width:174px">B</div>
<div class="ch" style="left:275px;width:86px">C</div>
<div class="ch" style="left:361px;width:84px">D</div>
<div class="ch" style="left:445px;width:119px">E</div>
<div class="ch" style="left:564px;width:114px">F</div>
<div class="ch" style="left:678px;width:116px">G</div>
<div class="ch" style="left:793px;width:133px;border-right:none;background:#d2d2d2;border-bottom:2px solid #217346;color:#217346">H</div>
<div class="ch" style="left:926px;width:101px">I</div>
<div class="ch" style="left:1027px;width:160px">J</div>
<div class="ch" style="left:1187px;width:90px">K</div>
<div class="ch" style="left:1277px;width:57px">L</div>
<div class="ch" style="left:1334px;width:12px;border-right:none"></div>
<div class="rh" style="top:20px;height:33px;line-height:48px;">1</div>
<div class="rh" style="top:53px;height:20px;line-height:20px;padding-top:1px;">2</div>
<div class="rh" style="top:73px;height:20px;line-height:20px;padding-top:1px;">3</div>
<div class="rh" style="top:93px;height:20px;line-height:20px;padding-top:1px;">4</div>
<div class="rh" style="top:113px;height:20px;line-height:20px;padding-top:1px;">5</div>
<div class="rh" style="top:133px;height:20px;line-height:20px;padding-top:1px;">6</div>
<div class="rh" style="top:153px;height:20px;line-height:20px;padding-top:1px;">7</div>
<div class="rh" style="top:173px;height:20px;line-height:20px;padding-top:1px;">8</div>
<div class="rh" style="top:193px;height:20px;line-height:20px;padding-top:1px;">9</div>
<div class="rh" style="top:213px;height:20px;line-height:20px;padding-top:1px;">10</div>
<div class="rh" style="top:233px;height:20px;line-height:20px;padding-top:1px;">11</div>
<div class="rh" style="top:253px;height:20px;line-height:20px;padding-top:1px;;background:#d2d2d2;border-right:2px solid #217346;color:#217346">12</div>
<div class="rh" style="top:273px;height:20px;line-height:20px;padding-top:1px;">13</div>
<div class="rh" style="top:293px;height:20px;line-height:20px;padding-top:1px;">14</div>
<div class="rh" style="top:313px;height:20px;line-height:20px;padding-top:1px;">15</div>
<div class="rh" style="top:333px;height:20px;line-height:20px;padding-top:1px;">16</div>
<div class="rh" style="top:353px;height:20px;line-height:20px;padding-top:1px;">17</div>
<div class="rh" style="top:373px;height:20px;line-height:20px;padding-top:1px;">18</div>
<div class="rh" style="top:393px;height:20px;line-height:20px;padding-top:1px;">19</div>
<div class="rh" style="top:413px;height:20px;line-height:20px;padding-top:1px;">20</div>
<div class="rh" style="top:433px;height:20px;line-height:20px;padding-top:1px;">21</div>
<div class="rh" style="top:453px;height:20px;line-height:20px;padding-top:1px;">22</div>
<div class="rh" style="top:473px;height:20px;line-height:20px;padding-top:1px;">23</div>
<div class="rh" style="top:493px;height:20px;line-height:20px;padding-top:1px;">24</div>
<div class="rh" style="top:513px;height:20px;line-height:20px;padding-top:1px;">25</div>
<div class="vl" style="left:100px"></div>
<div class="vl" style="left:274px"></div>
<div class="vl" style="left:360px"></div>
<div class="vl" style="left:444px"></div>
<div class="vl" style="left:563px"></div>
<div class="vl" style="left:677px"></div>
<div class="vl" style="left:793px"></div>
<div class="vl" style="left:925px"></div>
<div class="vl" style="left:1026px"></div>
<div class="vl" style="left:1186px"></div>
<div class="vl" style="left:1276px"></div>
<div class="vl" style="left:1333px"></div>
<div class="vl" style="left:1345px"></div>
<div class="hl" style="top:52px"></div>
<div class="hl" style="top:72px"></div>
<div class="hl" style="top:92px"></div>
<div class="hl" style="top:112px"></div>
<div class="hl" style="top:132px"></div>
<div class="hl" style="top:152px"></div>
<div class="hl" style="top:172px"></div>
<div class="hl" style="top:192px"></div>
<div class="hl" style="top:212px"></div>
<div class="hl" style="top:232px"></div>
<div class="hl" style="top:252px"></div>
<div class="hl" style="top:272px"></div>
<div class="hl" style="top:292px"></div>
<div class="hl" style="top:312px"></div>
<div class="hl" style="top:332px"></div>
<div class="hl" style="top:352px"></div>
<div class="hl" style="top:372px"></div>
<div class="hl" style="top:392px"></div>
<div class="hl" style="top:412px"></div>
<div class="hl" style="top:432px"></div>
<div class="hl" style="top:452px"></div>
<div class="hl" style="top:472px"></div>
<div class="hl" style="top:492px"></div>
<div class="hl" style="top:512px"></div>
<div class="hl" style="top:532px"></div>
<div style="left:26px;top:20px;width:1318px;height:32px;background:#d9d9d9"></div>
<div style="left:1344px;top:19px;width:1px;height:507px;background:#b4b4b4"></div>
<div style="left:27.5px;top:27.0px;line-height:20px;white-space:nowrap;font-size:13.4px;font-weight:bold;color:#000;letter-spacing:-0.71px;">ID</div>
<div style="left:43.2px;top:25.4px;line-height:20px;white-space:nowrap;font-size:14px;font-weight:bold;color:#000;transform:scaleX(0.7289);transform-origin:0 50%;direction:rtl;">رقم العميل</div>
<div style="left:100.8px;top:27.0px;line-height:20px;white-space:nowrap;font-size:13.4px;font-weight:bold;color:#000;letter-spacing:-0.29px;">Marital Status</div>
<div style="left:188.8px;top:25.4px;line-height:20px;white-space:nowrap;font-size:14px;font-weight:bold;color:#000;transform:scaleX(0.7837);transform-origin:0 50%;direction:rtl;">لحالة الاجتماعية</div>
<div style="left:276.2px;top:27.0px;line-height:20px;white-space:nowrap;font-size:13.4px;font-weight:bold;color:#000;letter-spacing:-0.80px;">Gender</div>
<div style="left:319.5px;top:25.4px;line-height:20px;white-space:nowrap;font-size:14px;font-weight:bold;color:#000;transform:scaleX(0.8827);transform-origin:0 50%;direction:rtl;">الجنس</div>
<div style="left:360.8px;top:27.0px;line-height:20px;white-space:nowrap;font-size:13.4px;font-weight:bold;color:#000;letter-spacing:-0.80px;">Income</div>
<div style="left:403.5px;top:25.4px;line-height:20px;white-space:nowrap;font-size:14px;font-weight:bold;color:#000;transform:scaleX(0.9893);transform-origin:0 50%;direction:rtl;">الدخل</div>
<div style="left:444.8px;top:27.0px;line-height:20px;white-space:nowrap;font-size:13.4px;font-weight:bold;color:#000;letter-spacing:-0.37px;">Children</div>
<div style="left:499.8px;top:25.4px;line-height:20px;white-space:nowrap;font-size:14px;font-weight:bold;color:#000;transform:scaleX(0.7563);transform-origin:0 50%;direction:rtl;">عدد الاطفال</div>
<div style="left:570.2px;top:27.0px;line-height:20px;white-space:nowrap;font-size:13.4px;font-weight:bold;color:#000;letter-spacing:-0.80px;">Education</div>
<div style="left:632.8px;top:25.4px;line-height:20px;white-space:nowrap;font-size:14px;font-weight:bold;color:#000;transform:scaleX(0.7616);transform-origin:0 50%;direction:rtl;">المؤهل</div>
<div style="left:679.5px;top:27.0px;line-height:20px;white-space:nowrap;font-size:13.4px;font-weight:bold;color:#000;letter-spacing:-0.48px;">Occupation</div>
<div style="left:751.8px;top:25.4px;line-height:20px;white-space:nowrap;font-size:14px;font-weight:bold;color:#000;transform:scaleX(0.7352);transform-origin:0 50%;direction:rtl;">الوظيفة</div>
<div style="left:794.8px;top:27.0px;line-height:20px;white-space:nowrap;font-size:13.4px;font-weight:bold;color:#000;letter-spacing:-0.10px;">Home Owner</div>
<div style="left:879.5px;top:25.4px;line-height:20px;white-space:nowrap;font-size:14px;font-weight:bold;color:#000;transform:scaleX(0.8101);transform-origin:0 50%;direction:rtl;">لديه بيت</div>
<div style="left:927.8px;top:27.0px;line-height:20px;white-space:nowrap;font-size:13.4px;font-weight:bold;color:#000;letter-spacing:-0.80px;">Cars</div>
<div style="left:956.2px;top:25.4px;line-height:20px;white-space:nowrap;font-size:14px;font-weight:bold;color:#000;transform:scaleX(0.7731);transform-origin:0 50%;direction:rtl;">عدد السيارات</div>
<div style="left:1026.8px;top:27.0px;line-height:20px;white-space:nowrap;font-size:13.4px;font-weight:bold;color:#000;letter-spacing:-0.37px;">Commute Distance</div>
<div style="left:1146.2px;top:25.4px;line-height:20px;white-space:nowrap;font-size:14px;font-weight:bold;color:#000;transform:scaleX(0.7243);transform-origin:0 50%;direction:rtl;">المسافة</div>
<div style="left:1187.2px;top:27.0px;line-height:20px;white-space:nowrap;font-size:13.4px;font-weight:bold;color:#000;letter-spacing:-0.56px;">Region</div>
<div style="left:1233.0px;top:25.4px;line-height:20px;white-space:nowrap;font-size:14px;font-weight:bold;color:#000;transform:scaleX(0.7529);transform-origin:0 50%;direction:rtl;">المنطقة</div>
<div style="left:1278.5px;top:27.0px;line-height:20px;white-space:nowrap;font-size:13.4px;font-weight:bold;color:#000;letter-spacing:-0.80px;">Age</div>
<div style="left:1305.0px;top:25.4px;line-height:20px;white-space:nowrap;font-size:14px;font-weight:bold;color:#000;transform:scaleX(0.7847);transform-origin:0 50%;direction:rtl;">العمر</div>
<div style="left:1333.5px;top:27.0px;line-height:20px;white-space:nowrap;font-size:13.4px;font-weight:bold;color:#000;letter-spacing:-0.80px;">Pu</div>
<div class="c n" style="left:6px;top:53px;width:115px">12496</div>
<div class="c" style="left:81px;top:53px;width:214px">M</div>
<div class="c" style="left:255px;top:53px;width:126px">F</div>
<div class="c n" style="left:341px;top:53px;width:124px">$40,000.00</div>
<div class="c n" style="left:425px;top:53px;width:159px">1</div>
<div class="c" style="left:544px;top:53px;width:154px">Bachelors</div>
<div class="c" style="left:658px;top:53px;width:156px">Skilled Manual</div>
<div class="c" style="left:774px;top:53px;width:172px">Yes</div>
<div class="c n" style="left:906px;top:53px;width:141px">0</div>
<div class="c" style="left:1007px;top:53px;width:200px">0-1 Miles</div>
<div class="c" style="left:1167px;top:53px;width:130px">Europe</div>
<div class="c n" style="left:1257px;top:53px;width:97px">42</div>
<div class="c n" style="left:6px;top:73px;width:115px">24107</div>
<div class="c" style="left:81px;top:73px;width:214px">M</div>
<div class="c" style="left:255px;top:73px;width:126px">M</div>
<div class="c n" style="left:341px;top:73px;width:124px">$30,000.00</div>
<div class="c n" style="left:425px;top:73px;width:159px">3</div>
<div class="c" style="left:544px;top:73px;width:154px">Partial College</div>
<div class="c" style="left:658px;top:73px;width:156px">Clerical</div>
<div class="c" style="left:774px;top:73px;width:172px">Yes</div>
<div class="c n" style="left:906px;top:73px;width:141px">1</div>
<div class="c" style="left:1007px;top:73px;width:200px">0-1 Miles</div>
<div class="c" style="left:1167px;top:73px;width:130px">Europe</div>
<div class="c n" style="left:1257px;top:73px;width:97px">43</div>
<div class="c n" style="left:6px;top:93px;width:115px">14177</div>
<div class="c" style="left:81px;top:93px;width:214px">M</div>
<div class="c" style="left:255px;top:93px;width:126px">M</div>
<div class="c n" style="left:341px;top:93px;width:124px">$80,000.00</div>
<div class="c n" style="left:425px;top:93px;width:159px">5</div>
<div class="c" style="left:544px;top:93px;width:154px">Partial College</div>
<div class="c" style="left:658px;top:93px;width:156px">Professional</div>
<div class="c" style="left:774px;top:93px;width:172px">No</div>
<div class="c n" style="left:906px;top:93px;width:141px">2</div>
<div class="c" style="left:1007px;top:93px;width:200px">2-5 Miles</div>
<div class="c" style="left:1167px;top:93px;width:130px">Europe</div>
<div class="c n" style="left:1257px;top:93px;width:97px">60</div>
<div class="c n" style="left:6px;top:113px;width:115px">24381</div>
<div class="c" style="left:81px;top:113px;width:214px">S</div>
<div class="c" style="left:255px;top:113px;width:126px">M</div>
<div class="c n" style="left:341px;top:113px;width:124px">$70,000.00</div>
<div class="c n" style="left:425px;top:113px;width:159px">0</div>
<div class="c" style="left:544px;top:113px;width:154px">Bachelors</div>
<div class="c" style="left:658px;top:113px;width:156px">Professional</div>
<div class="c" style="left:774px;top:113px;width:172px">Yes</div>
<div class="c n" style="left:906px;top:113px;width:141px">1</div>
<div class="c" style="left:1007px;top:113px;width:200px">5-10 Miles</div>
<div class="c" style="left:1167px;top:113px;width:130px">Pacific</div>
<div class="c n" style="left:1257px;top:113px;width:97px">41</div>
<div class="c n" style="left:6px;top:133px;width:115px">25597</div>
<div class="c" style="left:81px;top:133px;width:214px">S</div>
<div class="c" style="left:255px;top:133px;width:126px">M</div>
<div class="c n" style="left:341px;top:133px;width:124px">$30,000.00</div>
<div class="c n" style="left:425px;top:133px;width:159px">0</div>
<div class="c" style="left:544px;top:133px;width:154px">Bachelors</div>
<div class="c" style="left:658px;top:133px;width:156px">Clerical</div>
<div class="c" style="left:774px;top:133px;width:172px">No</div>
<div class="c n" style="left:906px;top:133px;width:141px">0</div>
<div class="c" style="left:1007px;top:133px;width:200px">0-1 Miles</div>
<div class="c" style="left:1167px;top:133px;width:130px">Europe</div>
<div class="c n" style="left:1257px;top:133px;width:97px">36</div>
<div class="c n" style="left:6px;top:153px;width:115px">13507</div>
<div class="c" style="left:81px;top:153px;width:214px">M</div>
<div class="c" style="left:255px;top:153px;width:126px">F</div>
<div class="c n" style="left:341px;top:153px;width:124px">$10,000.00</div>
<div class="c n" style="left:425px;top:153px;width:159px">2</div>
<div class="c" style="left:544px;top:153px;width:154px">Partial College</div>
<div class="c" style="left:658px;top:153px;width:156px">Manual</div>
<div class="c" style="left:774px;top:153px;width:172px">Yes</div>
<div class="c n" style="left:906px;top:153px;width:141px">0</div>
<div class="c" style="left:1007px;top:153px;width:200px">1-2 Miles</div>
<div class="c" style="left:1167px;top:153px;width:130px">Europe</div>
<div class="c n" style="left:1257px;top:153px;width:97px">50</div>
<div class="c n" style="left:6px;top:173px;width:115px">27974</div>
<div class="c" style="left:81px;top:173px;width:214px">S</div>
<div class="c" style="left:255px;top:173px;width:126px">M</div>
<div class="c n" style="left:341px;top:173px;width:124px">$160,000.00</div>
<div class="c n" style="left:425px;top:173px;width:159px">2</div>
<div class="c" style="left:544px;top:173px;width:154px">High School</div>
<div class="c" style="left:658px;top:173px;width:156px">Management</div>
<div class="c" style="left:774px;top:173px;width:172px">Yes</div>
<div class="c n" style="left:906px;top:173px;width:141px">4</div>
<div class="c" style="left:1007px;top:173px;width:200px">0-1 Miles</div>
<div class="c" style="left:1167px;top:173px;width:130px">Pacific</div>
<div class="c n" style="left:1257px;top:173px;width:97px">33</div>
<div class="c n" style="left:6px;top:193px;width:115px">19364</div>
<div class="c" style="left:81px;top:193px;width:214px">M</div>
<div class="c" style="left:255px;top:193px;width:126px">M</div>
<div class="c n" style="left:341px;top:193px;width:124px">$40,000.00</div>
<div class="c n" style="left:425px;top:193px;width:159px">1</div>
<div class="c" style="left:544px;top:193px;width:154px">Bachelors</div>
<div class="c" style="left:658px;top:193px;width:156px">Skilled Manual</div>
<div class="c" style="left:774px;top:193px;width:172px">Yes</div>
<div class="c n" style="left:906px;top:193px;width:141px">0</div>
<div class="c" style="left:1007px;top:193px;width:200px">0-1 Miles</div>
<div class="c" style="left:1167px;top:193px;width:130px">Europe</div>
<div class="c n" style="left:1257px;top:193px;width:97px">43</div>
<div class="c n" style="left:6px;top:213px;width:115px">22155</div>
<div class="c" style="left:81px;top:213px;width:214px">M</div>
<div class="c" style="left:255px;top:213px;width:126px">M</div>
<div class="c n" style="left:341px;top:213px;width:124px">$20,000.00</div>
<div class="c n" style="left:425px;top:213px;width:159px">2</div>
<div class="c" style="left:544px;top:213px;width:154px;letter-spacing:.23px">Partial High School</div>
<div class="c" style="left:658px;top:213px;width:156px">Clerical</div>
<div class="c" style="left:774px;top:213px;width:172px">Yes</div>
<div class="c n" style="left:906px;top:213px;width:141px">2</div>
<div class="c" style="left:1007px;top:213px;width:200px">5-10 Miles</div>
<div class="c" style="left:1167px;top:213px;width:130px">Pacific</div>
<div class="c n" style="left:1257px;top:213px;width:97px">58</div>
<div class="c n" style="left:6px;top:233px;width:115px">19280</div>
<div class="c" style="left:81px;top:233px;width:214px">M</div>
<div class="c" style="left:255px;top:233px;width:126px">M</div>
<div class="c n" style="left:341px;top:233px;width:124px">$120,000.00</div>
<div class="c n" style="left:425px;top:233px;width:159px">2</div>
<div class="c" style="left:544px;top:233px;width:154px">Partial College</div>
<div class="c" style="left:658px;top:233px;width:156px">Manual</div>
<div class="c" style="left:774px;top:233px;width:172px">Yes</div>
<div class="c n" style="left:906px;top:233px;width:141px">1</div>
<div class="c" style="left:1007px;top:233px;width:200px">0-1 Miles</div>
<div class="c" style="left:1167px;top:233px;width:130px">Europe</div>
<div class="c n" style="left:1257px;top:233px;width:97px">40</div>
<div class="c n" style="left:6px;top:253px;width:115px">22173</div>
<div class="c" style="left:81px;top:253px;width:214px">M</div>
<div class="c" style="left:255px;top:253px;width:126px">F</div>
<div class="c n" style="left:341px;top:253px;width:124px">$30,000.00</div>
<div class="c n" style="left:425px;top:253px;width:159px">3</div>
<div class="c" style="left:544px;top:253px;width:154px">High School</div>
<div class="c" style="left:658px;top:253px;width:156px">Skilled Manual</div>
<div class="c" style="left:774px;top:253px;width:172px">No</div>
<div class="c n" style="left:906px;top:253px;width:141px">2</div>
<div class="c" style="left:1007px;top:253px;width:200px">1-2 Miles</div>
<div class="c" style="left:1167px;top:253px;width:130px">Pacific</div>
<div class="c n" style="left:1257px;top:253px;width:97px">54</div>
<div class="c n" style="left:6px;top:273px;width:115px">12697</div>
<div class="c" style="left:81px;top:273px;width:214px">S</div>
<div class="c" style="left:255px;top:273px;width:126px">F</div>
<div class="c n" style="left:341px;top:273px;width:124px">$90,000.00</div>
<div class="c n" style="left:425px;top:273px;width:159px">0</div>
<div class="c" style="left:544px;top:273px;width:154px">Bachelors</div>
<div class="c" style="left:658px;top:273px;width:156px">Professional</div>
<div class="c" style="left:774px;top:273px;width:172px">No</div>
<div class="c n" style="left:906px;top:273px;width:141px">4</div>
<div class="c" style="left:1007px;top:273px;width:200px">10+ Miles</div>
<div class="c" style="left:1167px;top:273px;width:130px">Pacific</div>
<div class="c n" style="left:1257px;top:273px;width:97px">36</div>
<div class="c n" style="left:6px;top:293px;width:115px">11434</div>
<div class="c" style="left:81px;top:293px;width:214px">M</div>
<div class="c" style="left:255px;top:293px;width:126px">M</div>
<div class="c n" style="left:341px;top:293px;width:124px">$170,000.00</div>
<div class="c n" style="left:425px;top:293px;width:159px">5</div>
<div class="c" style="left:544px;top:293px;width:154px">Partial College</div>
<div class="c" style="left:658px;top:293px;width:156px">Professional</div>
<div class="c" style="left:774px;top:293px;width:172px">Yes</div>
<div class="c n" style="left:906px;top:293px;width:141px">0</div>
<div class="c" style="left:1007px;top:293px;width:200px">0-1 Miles</div>
<div class="c" style="left:1167px;top:293px;width:130px">Europe</div>
<div class="c n" style="left:1257px;top:293px;width:97px">55</div>
<div class="c n" style="left:6px;top:313px;width:115px">25323</div>
<div class="c" style="left:81px;top:313px;width:214px">M</div>
<div class="c" style="left:255px;top:313px;width:126px">M</div>
<div class="c n" style="left:341px;top:313px;width:124px">$40,000.00</div>
<div class="c n" style="left:425px;top:313px;width:159px">2</div>
<div class="c" style="left:544px;top:313px;width:154px">Partial College</div>
<div class="c" style="left:658px;top:313px;width:156px">Clerical</div>
<div class="c" style="left:774px;top:313px;width:172px">Yes</div>
<div class="c n" style="left:906px;top:313px;width:141px">1</div>
<div class="c" style="left:1007px;top:313px;width:200px">1-2 Miles</div>
<div class="c" style="left:1167px;top:313px;width:130px">Europe</div>
<div class="c n" style="left:1257px;top:313px;width:97px">35</div>
<div class="c n" style="left:6px;top:333px;width:115px">23542</div>
<div class="c" style="left:81px;top:333px;width:214px">S</div>
<div class="c" style="left:255px;top:333px;width:126px">M</div>
<div class="c n" style="left:341px;top:333px;width:124px">$60,000.00</div>
<div class="c n" style="left:425px;top:333px;width:159px">1</div>
<div class="c" style="left:544px;top:333px;width:154px">Partial College</div>
<div class="c" style="left:658px;top:333px;width:156px">Skilled Manual</div>
<div class="c" style="left:774px;top:333px;width:172px">No</div>
<div class="c n" style="left:906px;top:333px;width:141px">1</div>
<div class="c" style="left:1007px;top:333px;width:200px">0-1 Miles</div>
<div class="c" style="left:1167px;top:333px;width:130px">Pacific</div>
<div class="c n" style="left:1257px;top:333px;width:97px">45</div>
<div class="c n" style="left:6px;top:353px;width:115px">20870</div>
<div class="c" style="left:81px;top:353px;width:214px">S</div>
<div class="c" style="left:255px;top:353px;width:126px">F</div>
<div class="c n" style="left:341px;top:353px;width:124px">$10,000.00</div>
<div class="c n" style="left:425px;top:353px;width:159px">2</div>
<div class="c" style="left:544px;top:353px;width:154px">High School</div>
<div class="c" style="left:658px;top:353px;width:156px">Manual</div>
<div class="c" style="left:774px;top:353px;width:172px">Yes</div>
<div class="c n" style="left:906px;top:353px;width:141px">1</div>
<div class="c" style="left:1007px;top:353px;width:200px">0-1 Miles</div>
<div class="c" style="left:1167px;top:353px;width:130px">Europe</div>
<div class="c n" style="left:1257px;top:353px;width:97px">38</div>
<div class="c n" style="left:6px;top:373px;width:115px">23316</div>
<div class="c" style="left:81px;top:373px;width:214px">S</div>
<div class="c" style="left:255px;top:373px;width:126px">M</div>
<div class="c n" style="left:341px;top:373px;width:124px">$30,000.00</div>
<div class="c n" style="left:425px;top:373px;width:159px">3</div>
<div class="c" style="left:544px;top:373px;width:154px">Partial College</div>
<div class="c" style="left:658px;top:373px;width:156px">Clerical</div>
<div class="c" style="left:774px;top:373px;width:172px">No</div>
<div class="c n" style="left:906px;top:373px;width:141px">2</div>
<div class="c" style="left:1007px;top:373px;width:200px">1-2 Miles</div>
<div class="c" style="left:1167px;top:373px;width:130px">Pacific</div>
<div class="c n" style="left:1257px;top:373px;width:97px">59</div>
<div class="c n" style="left:6px;top:393px;width:115px">12610</div>
<div class="c" style="left:81px;top:393px;width:214px">M</div>
<div class="c" style="left:255px;top:393px;width:126px">F</div>
<div class="c n" style="left:341px;top:393px;width:124px">$30,000.00</div>
<div class="c n" style="left:425px;top:393px;width:159px">1</div>
<div class="c" style="left:544px;top:393px;width:154px">Bachelors</div>
<div class="c" style="left:658px;top:393px;width:156px">Clerical</div>
<div class="c" style="left:774px;top:393px;width:172px">Yes</div>
<div class="c n" style="left:906px;top:393px;width:141px">0</div>
<div class="c" style="left:1007px;top:393px;width:200px">0-1 Miles</div>
<div class="c" style="left:1167px;top:393px;width:130px">Europe</div>
<div class="c n" style="left:1257px;top:393px;width:97px">47</div>
<div class="c n" style="left:6px;top:413px;width:115px">27183</div>
<div class="c" style="left:81px;top:413px;width:214px">S</div>
<div class="c" style="left:255px;top:413px;width:126px">M</div>
<div class="c n" style="left:341px;top:413px;width:124px">$40,000.00</div>
<div class="c n" style="left:425px;top:413px;width:159px">2</div>
<div class="c" style="left:544px;top:413px;width:154px">Partial College</div>
<div class="c" style="left:658px;top:413px;width:156px">Clerical</div>
<div class="c" style="left:774px;top:413px;width:172px">Yes</div>
<div class="c n" style="left:906px;top:413px;width:141px">1</div>
<div class="c" style="left:1007px;top:413px;width:200px">1-2 Miles</div>
<div class="c" style="left:1167px;top:413px;width:130px">Europe</div>
<div class="c n" style="left:1257px;top:413px;width:97px">35</div>
<div class="c n" style="left:6px;top:433px;width:115px">25940</div>
<div class="c" style="left:81px;top:433px;width:214px">S</div>
<div class="c" style="left:255px;top:433px;width:126px">M</div>
<div class="c n" style="left:341px;top:433px;width:124px">$20,000.00</div>
<div class="c n" style="left:425px;top:433px;width:159px">2</div>
<div class="c" style="left:544px;top:433px;width:154px;letter-spacing:.23px">Partial High School</div>
<div class="c" style="left:658px;top:433px;width:156px">Clerical</div>
<div class="c" style="left:774px;top:433px;width:172px">Yes</div>
<div class="c n" style="left:906px;top:433px;width:141px">2</div>
<div class="c" style="left:1007px;top:433px;width:200px">5-10 Miles</div>
<div class="c" style="left:1167px;top:433px;width:130px">Pacific</div>
<div class="c n" style="left:1257px;top:433px;width:97px">55</div>
<div class="c n" style="left:6px;top:453px;width:115px">25598</div>
<div class="c" style="left:81px;top:453px;width:214px">M</div>
<div class="c" style="left:255px;top:453px;width:126px">F</div>
<div class="c n" style="left:341px;top:453px;width:124px">$40,000.00</div>
<div class="c n" style="left:425px;top:453px;width:159px">0</div>
<div class="c" style="left:544px;top:453px;width:154px">Graduate Degree</div>
<div class="c" style="left:658px;top:453px;width:156px">Clerical</div>
<div class="c" style="left:774px;top:453px;width:172px">Yes</div>
<div class="c n" style="left:906px;top:453px;width:141px">0</div>
<div class="c" style="left:1007px;top:453px;width:200px">0-1 Miles</div>
<div class="c" style="left:1167px;top:453px;width:130px">Europe</div>
<div class="c n" style="left:1257px;top:453px;width:97px">36</div>
<div class="c n" style="left:6px;top:473px;width:115px">21564</div>
<div class="c" style="left:81px;top:473px;width:214px">S</div>
<div class="c" style="left:255px;top:473px;width:126px">F</div>
<div class="c n" style="left:341px;top:473px;width:124px">$80,000.00</div>
<div class="c n" style="left:425px;top:473px;width:159px">0</div>
<div class="c" style="left:544px;top:473px;width:154px">Bachelors</div>
<div class="c" style="left:658px;top:473px;width:156px">Professional</div>
<div class="c" style="left:774px;top:473px;width:172px">Yes</div>
<div class="c n" style="left:906px;top:473px;width:141px">4</div>
<div class="c" style="left:1007px;top:473px;width:200px">10+ Miles</div>
<div class="c" style="left:1167px;top:473px;width:130px">Pacific</div>
<div class="c n" style="left:1257px;top:473px;width:97px">35</div>
<div class="c n" style="left:6px;top:493px;width:115px">19193</div>
<div class="c" style="left:81px;top:493px;width:214px">S</div>
<div class="c" style="left:255px;top:493px;width:126px">M</div>
<div class="c n" style="left:341px;top:493px;width:124px">$40,000.00</div>
<div class="c n" style="left:425px;top:493px;width:159px">2</div>
<div class="c" style="left:544px;top:493px;width:154px">Partial College</div>
<div class="c" style="left:658px;top:493px;width:156px">Clerical</div>
<div class="c" style="left:774px;top:493px;width:172px">Yes</div>
<div class="c n" style="left:906px;top:493px;width:141px">0</div>
<div class="c" style="left:1007px;top:493px;width:200px">1-2 Miles</div>
<div class="c" style="left:1167px;top:493px;width:130px">Europe</div>
<div class="c n" style="left:1257px;top:493px;width:97px">35</div>
<div class="c n" style="left:6px;top:513px;width:115px">26412</div>
<div class="c" style="left:81px;top:513px;width:214px">M</div>
<div class="c" style="left:255px;top:513px;width:126px">F</div>
<div class="c n" style="left:341px;top:513px;width:124px">$80,000.00</div>
<div class="c n" style="left:425px;top:513px;width:159px">5</div>
<div class="c" style="left:544px;top:513px;width:154px">High School</div>
<div class="c" style="left:658px;top:513px;width:156px">Management</div>
<div class="c" style="left:774px;top:513px;width:172px">No</div>
<div class="c n" style="left:906px;top:513px;width:141px">3</div>
<div class="c" style="left:1007px;top:513px;width:200px">5-10 Miles</div>
<div class="c" style="left:1167px;top:513px;width:130px">Europe</div>
<div class="c n" style="left:1257px;top:513px;width:97px">56</div>
<div style="left:792px;top:251px;width:135px;height:23px;border:2px solid #217346"></div>
<div style="left:922px;top:269px;width:6px;height:6px;background:#217346;border:1px solid #fff;border-right:none;border-bottom:none"></div>
</div>
<div id="vscroll" class="abs">
<div style="left:3px;top:2px;width:15px;height:15px;background:#fff;border:1px solid #b5b5b5"></div>
<svg style="left:7px;top:7px" width="8" height="5" viewBox="0 0 8 5"><path d="M0.300 4.500h7L3.800 0.500z" fill="#777"/></svg>
<div style="left:3px;top:17px;width:15px;height:17px;background:#fff;border:1px solid #b5b5b5"></div>
<div style="left:3px;top:34px;width:15px;height:479px;background:#dcdcdc"></div>
<div style="left:3px;top:512px;width:15px;height:15px;background:#fff;border:1px solid #c6c6c6"></div>
<svg style="left:7px;top:517px" width="8" height="5" viewBox="0 0 8 5"><path d="M0.300 0.500h7L3.800 4.500z" fill="#777"/></svg>
</div>
<div id="bottom" class="abs">
<svg style="left:25px;top:8px" width="6" height="9" viewBox="0 0 6 9"><path d="M5 0.500v8L0.800 4.500z" fill="#c3c3c3"/></svg>
<svg style="left:55px;top:8px" width="6" height="9" viewBox="0 0 6 9"><path d="M1 0.500v8L5.200 4.500z" fill="#c3c3c3"/></svg>
<div style="left:100px;top:-1px;width:96px;height:22px;background:#fff;border-right:1px solid #ababab;border-left:1px solid #c6c6c6"></div>
<div style="left:112.0px;top:5.0px;line-height:16px;white-space:nowrap;font-size:12.3px;font-weight:bold;color:#217346;letter-spacing:0.09px;">bike_buyers</div>
<svg style="left:228px;top:4px" width="18" height="18" viewBox="0 0 18 18"><circle cx="9" cy="8.800" r="7.500" fill="none" stroke="#808080" stroke-width="1"/><path d="M9 5v7.600M5.200 8.800h7.600" stroke="#666" stroke-width="1.900"/></svg>
<div style="left:819px;top:8px;width:2px;height:2px;background:#b0b0b0"></div>
<div style="left:819px;top:12px;width:2px;height:2px;background:#b0b0b0"></div>
<div style="left:819px;top:16px;width:2px;height:2px;background:#b0b0b0"></div>
<div style="left:836px;top:6px;width:15px;height:16px;background:#fff;border:1px solid #bdbdbd"></div>
<svg style="left:840px;top:9px" width="6" height="9" viewBox="0 0 6 9"><path d="M5 0.500v8L0.800 4.500z" fill="#777"/></svg>
<div style="left:851px;top:6px;width:405px;height:16px;background:#fff;border:1px solid #bdbdbd"></div>
<div style="left:1256px;top:7px;width:74px;height:14px;background:#d4d4d4"></div>
<div style="left:1330px;top:6px;width:15px;height:16px;background:#fff;border:1px solid #c6c6c6"></div>
<svg style="left:1335px;top:9px" width="6" height="9" viewBox="0 0 6 9"><path d="M1 0.500v8L5.200 4.500z" fill="#777"/></svg>
</div>
<div class="abs" style="left:0;top:0;width:1366px;height:699px;pointer-events:none">
<div style="left:600.5px;top:643.0px;line-height:50px;white-space:nowrap;font-size:46px;font-weight:bold;color:rgba(0,0,0,.075);transform:scaleX(0.9467);transform-origin:0 50%;direction:rtl;">خمسات</div>
</div>
</body></html>
